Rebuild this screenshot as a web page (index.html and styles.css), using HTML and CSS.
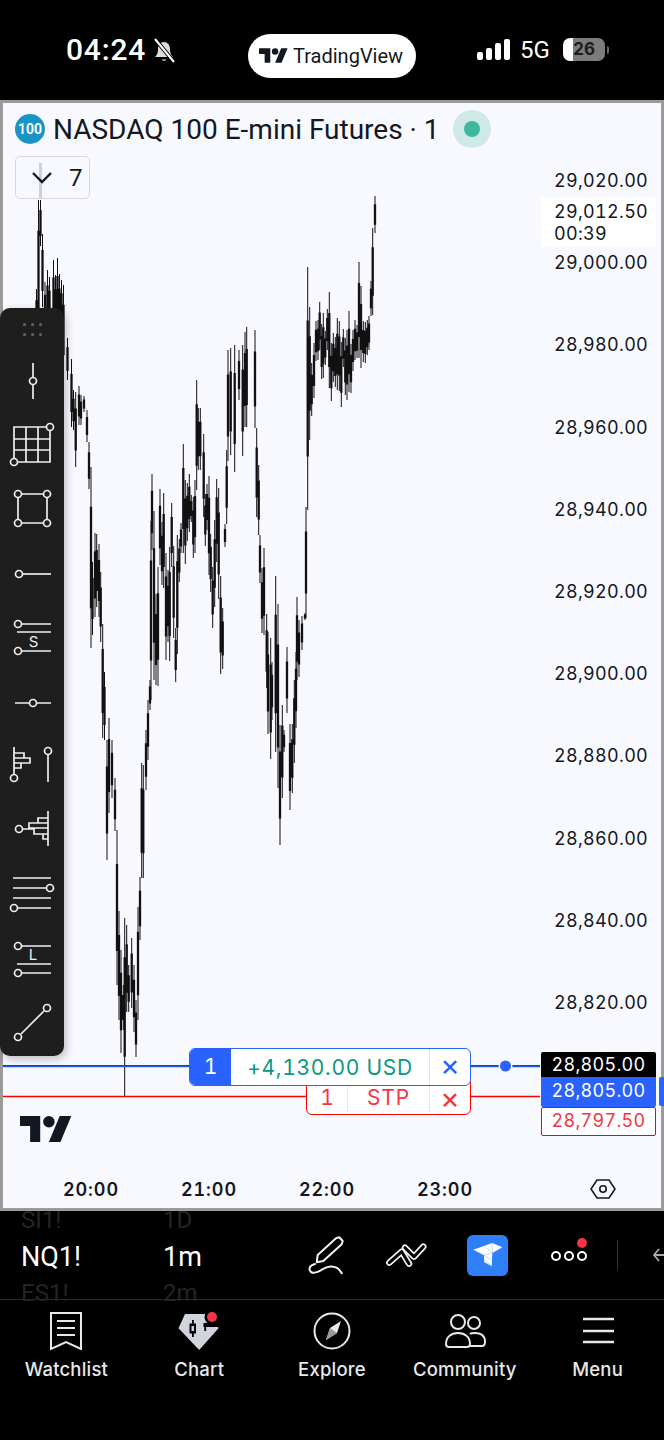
FILE: index.html
```html
<!DOCTYPE html>
<html lang="en">
<head>
    <meta charset="UTF-8">
    <meta name="viewport" content="width=device-width, initial-scale=1.0">
    <title>TradingView - NQ1!</title>
    <link rel="stylesheet" href="styles.css">
</head>
<body>
    <!-- Status bar -->
    <header class="status-bar">
        <div class="status-left">
            <span class="clock">04:24</span>
            <svg class="bell" viewBox="0 0 24 26" width="24" height="26" fill="none" stroke="#fff" stroke-width="2">
                <path d="M3 20c2-2 3-4 3-8 0-4 2.500-7 6-7s6 3 6 7c0 4 1 6 3 8z" fill="#ddd" stroke="none"/>
                <path d="M9.500 22.500c1 1.800 4 1.800 5 0" fill="#ddd" stroke="none"/>
                <path d="M3 2l19 23" stroke="#000" stroke-width="4"/>
                <path d="M3 2l19 23"/>
            </svg>
        </div>
        <div class="app-pill">
            <svg class="tv-logo" viewBox="0 0 36 26" width="29" height="21" fill="#131722">
                <path d="M14 22H7V11H0V4h14v18zM28 22h-8l7.500-18h8L28 22z"/><circle cx="20" cy="8" r="4"/>
            </svg>
            <span>TradingView</span>
        </div>
        <div class="status-right">
            <div class="signal"><i class="s1"></i><i class="s2"></i><i class="s3"></i><i class="s4"></i></div>
            <span class="net">5G</span>
            <div class="battery"><span>26</span></div>
            <i class="battery-nub"></i>
        </div>
    </header>

    <!-- Chart -->
    <main class="chart">
        <svg id="plot" class="plot" viewBox="3 103 658 1105" width="658" height="1105">
            <path id="wicks" fill="none" stroke="#111" stroke-width="1"/>
            <path id="bodies" fill="none" stroke="#111" stroke-width="2.300"/>
            <path d="M3 1065.500H189M471 1065.500H540" stroke="#3a3a3a" stroke-width="1"/>
            <path d="M3 1066.500H189M471 1066.500H540" stroke="#1f5fe0" stroke-width="1.500"/>
            <path d="M3 1096.500H306M471 1096.500H540" stroke="#f00" stroke-width="1.300"/>
            <circle cx="505.500" cy="1066" r="7" fill="#f8f8ff"/>
            <circle cx="505.500" cy="1066" r="5.500" fill="#2962ff"/>
        </svg>

        <div class="legend">
            <span class="symbol-badge">100</span>
            <span class="legend-title">NASDAQ 100 E-mini Futures · 1</span>
            <span class="market-dot"></span>
        </div>
        <div class="collapse-btn">
            <svg viewBox="0 0 24 16" width="24" height="16" fill="none" stroke="#131722" stroke-width="2.400"><path d="M3 3l9 9 9-9"/></svg>
            <span>7</span>
        </div>

        <div class="price-axis">
            <span>29,020.00</span>
            <span>29,000.00</span>
            <span>28,980.00</span>
            <span>28,960.00</span>
            <span>28,940.00</span>
            <span>28,920.00</span>
            <span>28,900.00</span>
            <span>28,880.00</span>
            <span>28,860.00</span>
            <span>28,840.00</span>
            <span>28,820.00</span>
        </div>
        <div class="last-price">
            <span>29,012.50</span>
            <span>00:39</span>
        </div>

        <div class="tags">
            <span class="tag tag-black">28,805.00</span>
            <span class="tag tag-blue">28,805.00</span>
            <span class="tag tag-red">28,797.50</span>
        </div>
        <i class="tag-sliver"></i>

        <div class="order order-stop">
            <span class="order-qty">1</span>
            <span class="order-label">STP</span>
            <span class="order-close">×</span>
        </div>
        <div class="order order-position">
            <span class="order-qty">1</span>
            <span class="order-label">+4,130.00 USD</span>
            <span class="order-close">×</span>
        </div>

        <svg class="chart-logo" viewBox="0 0 36 18" width="52" height="26" fill="#131722">
            <path d="M14 18H7V7H0V0h14v18zM28 18h-8l7.500-18h8L28 18z"/><circle cx="20" cy="4" r="4"/>
        </svg>

        <div class="time-axis">
            <span>20:00</span>
            <span>21:00</span>
            <span>22:00</span>
            <span>23:00</span>
        </div>
        <svg class="settings" viewBox="0 0 26 22" width="26" height="22" fill="none" stroke="#131722" stroke-width="1.600">
            <path d="M7 2h12l6 9-6 9H7l-6-9z"/><circle cx="13" cy="11" r="3.200"/>
        </svg>

        <!-- Drawing toolbar -->
        <aside class="draw-bar">
            <div class="grip"><i></i><i></i><i></i><i></i><i></i><i></i></div>
            <svg class="tool" viewBox="0 0 64 64"><path d="M33 14V28M33 36V50"/><circle cx="33" cy="32" r="3.500"/></svg>
            <svg class="tool" viewBox="0 0 64 64"><path d="M47 14H14V46M50 18V49H18M14 26H50M14 37H50M26 14V49M38 14V49"/><circle cx="50" cy="14" r="3.500"/><circle cx="14" cy="49" r="3.500"/></svg>
            <svg class="tool" viewBox="0 0 64 64"><path d="M22 17H43M22 46H43M18 21V42M47 21V42"/><circle cx="18" cy="17" r="3.500"/><circle cx="47" cy="17" r="3.500"/><circle cx="18" cy="46" r="3.500"/><circle cx="47" cy="46" r="3.500"/></svg>
            <svg class="tool" viewBox="0 0 64 64"><path d="M23 33H51"/><circle cx="19" cy="33" r="3.500"/></svg>
            <svg class="tool" viewBox="0 0 64 64"><path d="M22 19H51M17 27H51M22 46H51"/><circle cx="18" cy="19" r="3.500"/><circle cx="18" cy="46" r="3.500"/><text x="33.500" y="42" text-anchor="middle">S</text></svg>
            <svg class="tool" viewBox="0 0 64 64"><path d="M15 34H29M37 34H51"/><circle cx="33" cy="34" r="3.500"/></svg>
            <svg class="tool" viewBox="0 0 64 64"><path d="M14 14V41M14 20H24V25H14M24 25H30V30H14M14 35H21V30M48 22V49"/><circle cx="14" cy="45" r="3.500"/><circle cx="48" cy="18" r="3.500"/></svg>
            <svg class="tool" viewBox="0 0 64 64"><path d="M48 14V49M48 21H38V26H48M38 26H29V31H48M23 32H34V37H48M43 37V42H48"/><circle cx="19" cy="32" r="3.500"/></svg>
            <svg class="tool" viewBox="0 0 64 64"><path d="M13 17H51M13 27H46M13 37H51M18 47H51"/><circle cx="50" cy="27" r="3.500"/><circle cx="14" cy="47" r="3.500"/></svg>
            <svg class="tool" viewBox="0 0 64 64"><path d="M22 21H51M17 39H51M22 48H51"/><circle cx="18" cy="21" r="3.500"/><circle cx="18" cy="48" r="3.500"/><text x="33" y="35" text-anchor="middle">L</text></svg>
            <svg class="tool" viewBox="0 0 64 64"><path d="M21 45L44 22"/><circle cx="18" cy="48" r="3.500"/><circle cx="47" cy="19" r="3.500"/></svg>
        </aside>
    </main>

    <!-- Symbol / interval picker and quick actions -->
    <section class="quick-row">
        <div class="picker picker-symbol">
            <span class="ghost ghost-top">SI1!</span>
            <span class="picked">NQ1!</span>
            <span class="ghost ghost-bottom">ES1!</span>
        </div>
        <div class="picker picker-interval">
            <span class="ghost ghost-top">1D</span>
            <span class="picked">1m</span>
            <span class="ghost ghost-bottom">2m</span>
        </div>
        <div class="quick-actions">
            <svg class="pen" viewBox="0 0 40 42" width="40" height="42" fill="none" stroke="#f2f2f2" stroke-width="2" stroke-linejoin="round" stroke-linecap="round">
                <path d="M11.700 27.300L12.700 20 31 3.300 34.300 2.300 37.700 6 36.700 9.300 18.300 26z"/>
                <path d="M10 29C6 30 4 32 4.700 35 5.500 38 9 38.500 13.300 36.700 17 35 20 32 24 31.700 30 31 34 33 36.700 38.300"/>
            </svg>
            <svg class="trend" viewBox="0 0 42 31" width="42" height="31" fill="none" stroke-linejoin="round" stroke-linecap="round">
                <path d="M4.300 22.700L16.700 11.700 24 23.700M20 7.700L29 16.700 38.300 6.700" stroke="#f2f2f2" stroke-width="6.400"/>
                <path d="M4.300 22.700L16.700 11.700 24 23.700M20 7.700L29 16.700 38.300 6.700" stroke="#000" stroke-width="3"/>
            </svg>
            <div class="tv-ai">
                <svg viewBox="0 0 30 30" width="30" height="30" fill="#fff">
                    <path d="M.3 9.700L19.300 3 29.300 7.300 19.300 13 18.700 26.300 11 22V15.300z"/>
                    <path d="M11 15.300L19.300 13M11 15.300L18.800 20M11 20L18.700 26M19.300 13L14 8M19.300 3V13" stroke="#9cc4fb" stroke-width=".7"/>
                </svg>
            </div>
            <div class="more">
                <i></i><i></i><i></i>
                <b class="red-dot"></b>
            </div>
            <i class="divider"></i>
            <svg class="back" viewBox="0 0 12 14" width="12" height="14" fill="none" stroke="#aaa" stroke-width="1.800"><path d="M7 1L2 7l5 6M2 7H12"/></svg>
        </div>
    </section>

    <!-- Tabs -->
    <nav class="tabs">
        <a class="tab">
            <svg viewBox="0 0 36 40" width="36" height="40" fill="none" stroke="#e8e8e8" stroke-width="2"><path d="M3 2H33V38L18 31 3 38zM9 10H27M9 17H27M9 24H27"/></svg>
            <span>Watchlist</span>
        </a>
        <a class="tab">
            <svg viewBox="0 0 46 40" width="46" height="40">
                <path d="M9 3H37L42.500 17.300 23.200 39 2.500 17.300z" fill="#d1d4dc"/>
                <path d="M16.900 9V26M29.200 12V20" stroke="#000" stroke-width="1.800" fill="none"/>
                <path d="M13.500 12.500H20V22.500H13.500zM27.500 12H44V16H27.500z" fill="#000"/>
                <path d="M15.500 15H18V20H15.500z" fill="#d1d4dc"/>
                <circle cx="36" cy="6" r="7.500" fill="#000"/>
                <circle cx="36" cy="6" r="5" fill="#f23645"/>
            </svg>
            <span>Chart</span>
        </a>
        <a class="tab">
            <svg viewBox="0 0 40 40" width="40" height="40" fill="none" stroke="#e8e8e8" stroke-width="2"><circle cx="20" cy="20" r="17.500"/><path d="M29 10L18 17 14 29 25 22z" fill="#e8e8e8" stroke="none"/><path d="M18 17L25 22 14 29z" fill="#9a9a9a" stroke="none"/></svg>
            <span>Explore</span>
        </a>
        <a class="tab">
            <svg viewBox="0 0 42 40" width="42" height="40" fill="none" stroke="#e8e8e8" stroke-width="2"><circle cx="14" cy="11" r="7"/><circle cx="30" cy="12" r="6"/><path d="M2 33c0-7 5-11 12-11s12 4 12 11c0 2-1 3-3 3H5c-2 0-3-1-3-3z"/><path d="M26 23c1-1 3-1 5-1 6 0 10 3 10 9 0 3-1 4-3 4H26"/></svg>
            <span>Community</span>
        </a>
        <a class="tab">
            <svg viewBox="0 0 36 40" width="36" height="40" fill="none" stroke="#e8e8e8" stroke-width="2.400"><path d="M3 8H34M3 20H34M3 31H34"/></svg>
            <span>Menu</span>
        </a>
    </nav>

    <script src="chart.js"></script>
</body>
</html>
```

FILE: styles.css
```css
* {
    box-sizing: border-box;
}

html, body {
    margin: 0;
    padding: 0;
    background-color: #000;
}

body {
    width: 664px;
    height: 1440px;
    overflow: hidden;
    font-family: Inter, "Liberation Sans", sans-serif;
    font-variant-numeric: tabular-nums;
    display: flex;
    flex-direction: column;
}

/* Status bar */
.status-bar {
    height: 100px;
    display: flex;
    align-items: center;
    padding: 0 0 0 66px;
    color: #fff;
}

.status-left {
    width: 182px;
    display: flex;
    align-items: center;
    gap: 6px;
    margin-top: -1px;
}

.clock {
    font-size: 30px;
    font-weight: 500;
    line-height: 32px;
    font-family: Roboto, sans-serif;
    letter-spacing: 0.8px;
    width: 80px;
}

.app-pill {
    width: 168px;
    height: 44px;
    margin-top: 11px;
    background-color: #fff;
    border-radius: 22px;
    display: flex;
    align-items: center;
    padding-left: 11px;
    gap: 5px;
    color: #131722;
    font-size: 20px;
    font-family: Roboto, sans-serif;
}

.status-right {
    margin-left: 61px;
    margin-top: -1px;
    display: flex;
    align-items: center;
}

.signal {
    display: flex;
    align-items: flex-end;
    gap: 3px;
    height: 21px;
    width: 44px;
}

.signal i {
    width: 6px;
    background-color: #fff;
    border-radius: 2px;
}

.s1 { height: 8px; }
.s2 { height: 12px; }
.s3 { height: 17px; }
.s4 { height: 21px; }

.net {
    font-size: 24px;
    font-family: Roboto, sans-serif;
    width: 43px;
    margin-left: -1px;
}

.battery {
    width: 42px;
    height: 23px;
    border-radius: 7px;
    background: linear-gradient(to right, #fff 24%, #7c7c7c 24%);
    text-align: center;
}

.battery span {
    color: #1c1c1c;
    font-size: 17px;
    font-weight: 700;
    line-height: 23px;
    display: block;
}

.battery-nub {
    width: 2px;
    height: 8px;
    margin-left: 2px;
    background-color: #666;
    border-radius: 0 2px 2px 0;
}

/* Chart */
.chart {
    position: relative;
    height: 1111px;
    border: 3px solid #9b9b9b;
    background-color: #f8f8ff;
}

.plot {
    position: absolute;
    top: 0;
    left: 0;
}

.legend {
    position: absolute;
    top: 7px;
    left: 12px;
    display: flex;
    align-items: center;
}

.symbol-badge {
    width: 30px;
    height: 30px;
    border-radius: 50%;
    background-color: #1a94c4;
    color: #fff;
    font-size: 14px;
    font-weight: 600;
    line-height: 30px;
    text-align: center;
    font-family: Roboto, sans-serif;
}

.legend-title {
    margin-left: 8px;
    font-size: 28px;
    line-height: 35px;
    color: #131722;
    font-family: Roboto, sans-serif;
}

.market-dot {
    width: 38px;
    height: 38px;
    margin-left: 13px;
    border-radius: 50%;
    background-color: #cfe9e7;
    position: relative;
}

.market-dot::after {
    content: "";
    position: absolute;
    top: 11px;
    left: 11px;
    width: 16px;
    height: 16px;
    border-radius: 50%;
    background-color: #3eb89c;
}

.collapse-btn {
    position: absolute;
    top: 53px;
    left: 12px;
    width: 75px;
    height: 43px;
    border: 1px solid #d8d8dc;
    border-radius: 5px;
    display: flex;
    align-items: center;
    padding-left: 14px;
    gap: 15px;
    font-size: 24px;
    color: #131722;
    font-family: Roboto, sans-serif;
}

/* wick of the first bar seen through the button */
.collapse-btn::before {
    content: "";
    position: absolute;
    top: 6px;
    bottom: 0;
    left: 23px;
    width: 3px;
    background-color: #cfcfd4;
}

.collapse-btn svg,
.collapse-btn span {
    position: relative;
}

.price-axis {
    position: absolute;
    top: 37px;
    left: 551px;
    display: flex;
    flex-direction: column;
}

.price-axis span {
    height: 82.200px;
    line-height: 82.200px;
    font-size: 18px;
    color: #131722;
    letter-spacing: 0.3px;
}

.last-price {
    position: absolute;
    top: 95px;
    left: 538px;
    width: 115px;
    height: 49px;
    padding: 3px 0 0 13px;
    background-color: #fff;
    display: flex;
    flex-direction: column;
    font-size: 18px;
    line-height: 22px;
    color: #131722;
    letter-spacing: 0.3px;
}

.tags {
    position: absolute;
    top: 949px;
    left: 538px;
    width: 115px;
    display: flex;
    flex-direction: column;
    font-size: 18px;
    letter-spacing: 0.3px;
    text-align: center;
}

.tag {
    display: block;
}

.tag-black {
    height: 25px;
    line-height: 25px;
    background-color: #000;
    color: #fff;
    border-radius: 2px 2px 0 0;
}

.tag-blue {
    height: 30px;
    line-height: 28px;
    background-color: #2962ff;
    color: #fff;
    border-radius: 0 0 2px 2px;
}

.tag-red {
    height: 29px;
    line-height: 26px;
    background-color: #fff;
    color: #f23645;
    border: 1.500px solid #f00;
    border-radius: 2px;
}

.tag-sliver {
    position: absolute;
    top: 974px;
    left: 656px;
    width: 5px;
    height: 29px;
    background-color: #2962ff;
    border-radius: 2px 0 0 2px;
}

.order {
    position: absolute;
    display: flex;
    align-items: center;
    font-size: 21px;
    background-color: #fff;
    left: 186px;
}

.order-position {
    top: 945px;
    width: 282px;
    height: 38px;
    border: 1.500px solid #2962ff;
    border-radius: 6px;
    color: #089981;
    overflow: hidden;
}

.order-position .order-qty {
    width: 41px;
    height: 100%;
    background-color: #2962ff;
    color: #fff;
    line-height: 35px;
    text-align: center;
}

.order-position .order-label {
    flex: 1;
    text-align: center;
    font-size: 21px;
    letter-spacing: 0.7px;
}

.order-position .order-close {
    width: 41px;
    border-left: 1px solid #d6e2f5;
    color: #2962ff;
    text-align: center;
    font-size: 30px;
    line-height: 32px;
    height: 100%;
}

.order-stop {
    top: 976px;
    left: 303px;
    width: 165px;
    height: 36px;
    padding-top: 2px;
    border: 1.500px solid #f00;
    border-radius: 0 0 6px 6px;
    color: #f23645;
}

.order-stop .order-qty {
    width: 41px;
    text-align: center;
    border-right: 1px solid #fbdfe1;
    line-height: 28px;
}

.order-stop .order-label {
    flex: 1;
    text-align: center;
    font-size: 21px;
    letter-spacing: 0.8px;
    border-right: 1px solid #fbdfe1;
    line-height: 28px;
}

.order-stop .order-close {
    width: 40px;
    text-align: center;
    font-size: 30px;
    line-height: 22px;
}

.chart-logo {
    position: absolute;
    top: 1013px;
    left: 17px;
}

.time-axis {
    position: absolute;
    top: 1075px;
    left: 29px;
    display: flex;
    font-size: 18px;
    font-weight: 600;
    color: #131722;
    letter-spacing: 0.9px;
}

.time-axis span {
    width: 118px;
    text-align: center;
    line-height: 24px;
}

.settings {
    position: absolute;
    top: 1075px;
    left: 587px;
}

/* Drawing toolbar */
.draw-bar {
    position: absolute;
    top: 205px;
    left: -3px;
    width: 64px;
    height: 748px;
    background-color: #1e1e1e;
    border-radius: 10px;
    box-shadow: 2px 3px 8px rgba(0, 0, 0, 0.25);
    display: flex;
    flex-direction: column;
}

.grip {
    height: 41px;
    padding: 15px 19px 0 23px;
    display: grid;
    grid-template-columns: repeat(3, 3px);
    grid-auto-rows: 3px;
    column-gap: 5px;
    row-gap: 7px;
}

.grip i {
    background-color: #666;
    border-radius: 50%;
}

.tool {
    width: 64px;
    height: 64px;
    flex: none;
    fill: none;
    stroke: #eee;
    stroke-width: 1.700;
}

.tool text {
    fill: #eee;
    stroke: none;
    font-size: 15px;
}

/* Picker row */
.quick-row {
    height: 89px;
    position: relative;
    display: flex;
    border-bottom: 1px solid #2a2a2a;
    color: #fff;
    font-family: Roboto, sans-serif;
}

.picker {
    position: relative;
    font-size: 27px;
}

.picker-symbol {
    width: 163px;
    padding-left: 21px;
}

.picker-interval {
    width: 109px;
}

.picker span {
    position: absolute;
}

.picked {
    top: 29px;
    line-height: 34px;
}

.ghost {
    color: #242424;
    font-size: 24px;
    line-height: 30px;
}

.ghost-top {
    top: -6px;
}

.ghost-bottom {
    top: 67px;
}

.quick-actions {
    flex: 1;
    display: flex;
    align-items: center;
    padding-left: 33px;
}

.pen {
    margin-top: 2px;
}

.trend {
    margin-left: 40px;
}

.tv-ai {
    width: 41px;
    height: 41px;
    margin-left: 40px;
    background-color: #2f80f8;
    border-radius: 6px;
    display: flex;
    align-items: center;
    justify-content: center;
}

.more {
    position: relative;
    margin-left: 43px;
    display: flex;
    gap: 3px;
    margin-top: 1px;
}

.more i {
    width: 10px;
    height: 10px;
    border: 2.200px solid #fff;
    border-radius: 50%;
}

.red-dot {
    position: absolute;
    top: -13px;
    left: 26px;
    width: 10px;
    height: 10px;
    border-radius: 50%;
    background-color: #f23645;
}

.divider {
    width: 1px;
    height: 30px;
    margin-left: 30px;
    background-color: #333;
}

.back {
    margin-left: 34px;
}

/* Tabs */
.tabs {
    flex: 1;
    display: flex;
    padding-top: 11px;
}

.tab {
    flex: 1;
    display: flex;
    flex-direction: column;
    align-items: center;
    color: #e8e8e8;
    font-size: 18.500px;
    letter-spacing: 0.2px;
    font-weight: 500;
}

.tab span {
    margin-top: 7px;
    line-height: 22px;
}
```

FILE: chart.js
```js
// x, high, low of every bar (screen coordinates of the plot)
const bars = [
    [36.5,289,340],[38.5,200,340],[40.5,200,246],[42.5,234,307],[45,282,340],[47.5,270,340],[49.5,277,340],
    [53.5,260,340],[55.5,275,340],[57.5,258,340],[59.5,274,340],[61.5,280,340],[63.5,285,375],
    [67.5,338,380],[71.5,359,427],[73.5,390,430],[75.7,392,467],[79,386,425],[81,395,425],[84,396,412],
    [87,410,442],[89,442,489],[91,467,648],[92.5,562,635],[95,533,617],[96.7,534,607],[99,544,617],[100.7,572,642],
    [102.7,624,738],[104.5,672,740],[107,740,860],[109,718,813],[112,740,798],[115,778,831],[117,830,985],
    [119,911,1020],[121,950,1053],[123.3,985,1030],[124.7,918,1096],[126.7,925,1012],[128.7,965,1012],[131.7,938,1008],
    [134,965,1032],[136,1000,1057],[138,907,1020],[140,877,940],[141.7,763,878],[143.3,765,878],[146,730,790],[148,700,760],
    [150,680,710],[151,521,700],[152,474,550],[154,511,680],[156,594,685],[158,567,686],[160,489,565],[162,522,585],
    [163.7,493,588],[166,553,660],[168,570,642],[169.7,547,661],[171.7,503,567],[173.7,546,638],[175.7,628,682],[177.3,535,654],
    [179.3,539,582],[181,523,553],[183.3,444,553],[185.3,480,564],[187.3,483,541],[189.3,474,532],[191.3,495,522],[193.3,497,558],
    [195,480,553],[196.7,380,490],[198.3,408,470],[200.3,408,470],[203.7,434,517],[205.3,494,546],[207,484,530],
    [209,476,575],[210.7,534,592],[212.7,567,628],[214.7,520,607],[216.7,479,562],[218.7,488,599],[220.7,576,674],[222.7,608,669],
    [225,524,547],[226.7,450,524],[228,350,461],[230.7,348,455],[234.7,345,472],[239,350,400],
    [242.7,345,456],[245,332,427],[246.7,327,427],[255,330,428],[256.7,428,517],[258.7,465,535],[260,535,583],
    [262,568,633],[264,548,635],[266.7,614,688],[268,632,734],[270.7,638,759],[272,662,720],[275.7,576,752],[278,604,788],
    [280,725,845],[282.3,705,798],[284,730,752],[287,647,713],[290,724,810],[292.3,724,793],[294.3,680,763],[296,652,728],
    [297,597,680],[299,620,677],[302,616,650],[305,613,620],[306,507,618],[307.7,267,510],[309.7,307,440],
    [311.7,363,416],[314,343,398],[316,321,361],[318,320,360],[319.7,302,350],[321.7,324,379],[323.3,313,378],[325.3,331,365],
    [327.3,309,350],[329.3,292,388],[331.3,343,401],[333.3,333,382],[335.3,337,387],[337.3,318,390],[339.3,321,391],[341.3,342,407],
    [343.3,329,367],[345.3,338,395],[347,330,400],[349,311,392],[351,344,393],[353,330,371],[355,320,360],[357,325,358],
    [359,262,358],[361,286,368],[363.3,321,362],[365.3,322,363],[367.3,320,355],[369,316,350],[371,281,316],[372.7,228,315],[375,196,233]
];

let wicks = "";
let bodies = "";
for (const [x, high, low] of bars) {
    const pad = (low - high) * 0.22;
    wicks += `M${x} ${high}V${low}`;
    bodies += `M${x} ${high + pad}V${low - pad}`;
}
document.getElementById("wicks").setAttribute("d", wicks);
document.getElementById("bodies").setAttribute("d", bodies);
```
